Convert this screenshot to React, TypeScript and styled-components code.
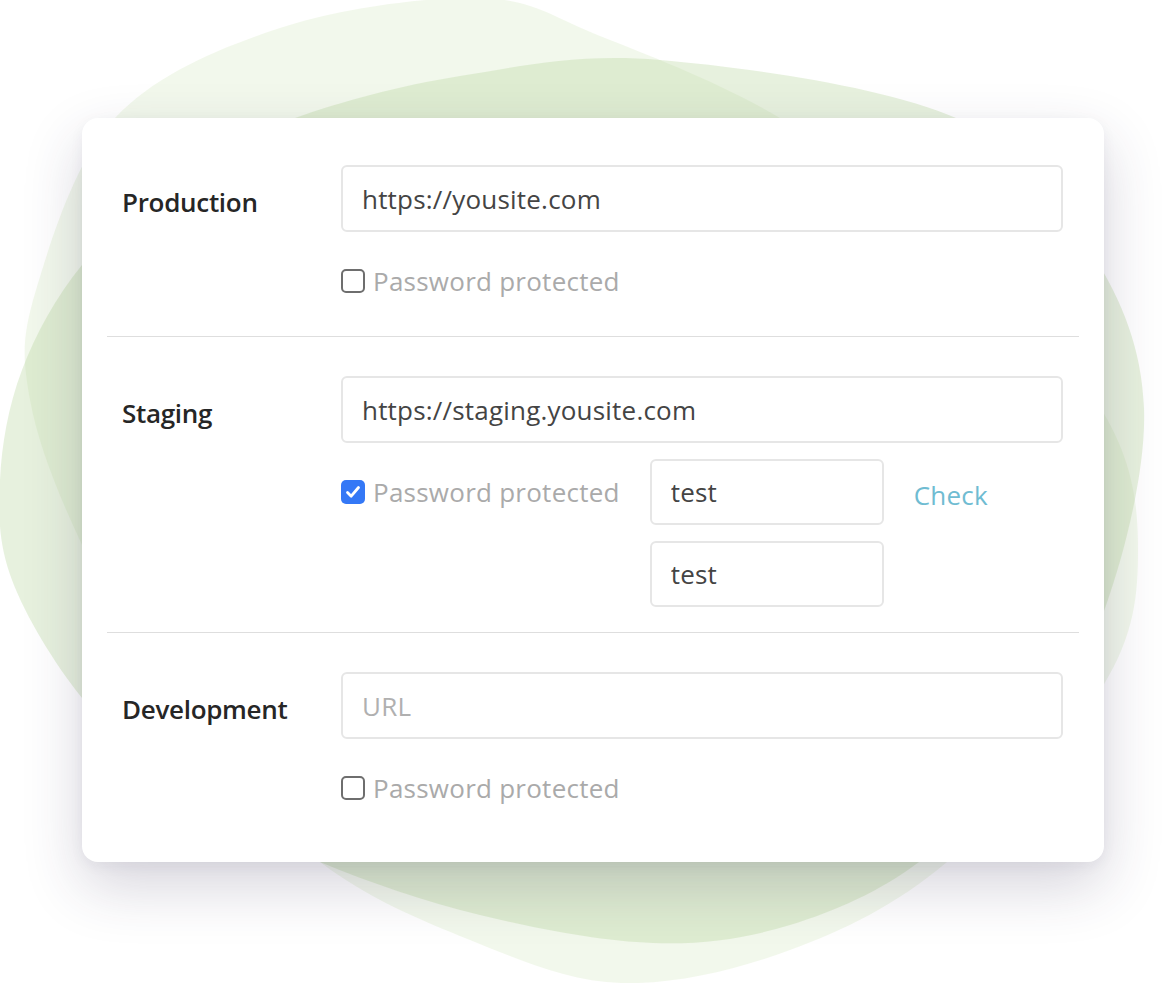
import React, { useState } from 'react';
import styled, { createGlobalStyle } from 'styled-components';

const GlobalStyle = createGlobalStyle`
  html, body {
    margin: 0;
    padding: 0;
    background: #ffffff;
  }
  * {
    box-sizing: border-box;
  }
`;

type Pt = [number, number];

// Closed Catmull-Rom spline through the blob outline points
const smoothPath = (pts: Pt[]) => {
  const n = pts.length;
  let d = `M ${pts[0][0]} ${pts[0][1]}`;
  for (let i = 0; i < n; i++) {
    const p0 = pts[(i - 1 + n) % n];
    const p1 = pts[i];
    const p2 = pts[(i + 1) % n];
    const p3 = pts[(i + 2) % n];
    const c1 = [p1[0] + (p2[0] - p0[0]) / 6, p1[1] + (p2[1] - p0[1]) / 6];
    const c2 = [p2[0] - (p3[0] - p1[0]) / 6, p2[1] - (p3[1] - p1[1]) / 6];
    d += ` C ${c1[0]} ${c1[1]} ${c2[0]} ${c2[1]} ${p2[0]} ${p2[1]}`;
  }
  return d + ' Z';
};

const lightBlob: Pt[] = [
  [480, -2], [600, 36], [780, 118], [960, 250], [1103, 412], [1138, 549],
  [1103, 686], [947, 862], [790, 950], [621, 983], [470, 940], [320, 862],
  [180, 720], [82, 545], [30, 400], [36, 290], [115, 118], [280, 28],
];

const darkBlob: Pt[] = [
  [660, 60], [956, 118], [1090, 250], [1144, 408], [1104, 611], [1020, 750],
  [919, 862], [790, 925], [653, 943], [480, 915], [320, 862], [180, 790],
  [82, 698], [12, 580], [0, 480], [22, 370], [82, 265], [180, 175],
  [295, 118], [460, 76],
];

const Stage = styled.div`
  position: relative;
  width: 1176px;
  height: 983px;
  overflow: hidden;
  padding: 118px 72px 0 82px;
  font-family: 'Open Sans', 'Noto Sans', sans-serif;
`;

const Backdrop = styled.svg`
  position: absolute;
  inset: 0;
  z-index: 0;
`;

const Card = styled.div`
  position: relative;
  z-index: 1;
  width: 1022px;
  background: #ffffff;
  border-radius: 16px;
  padding: 8px 25px 19px;
  box-shadow: 0 24px 60px rgba(48, 40, 80, 0.2), 0 4px 14px rgba(48, 40, 80, 0.05);
`;

const Section = styled.section<{ $last?: boolean }>`
  display: grid;
  grid-template-columns: 219px 1fr;
  padding: 39px 16px 22px 15px;
  border-bottom: ${(p) => (p.$last ? 'none' : '1px solid #dedede')};
`;

const Label = styled.div`
  font-size: 26px;
  font-weight: 600;
  color: #262626;
  line-height: 67px;
  padding-top: 4px;
  letter-spacing: -0.3px;
`;

const Fields = styled.div`
  display: flex;
  flex-direction: column;
  gap: 16px;
`;

const TextInput = styled.input<{ $small?: boolean }>`
  display: block;
  width: ${(p) => (p.$small ? '234px' : '100%')};
  height: ${(p) => (p.$small ? '66px' : '67px')};
  border: 2px solid #e6e6e6;
  border-radius: 6px;
  padding: 0 19px;
  font-family: inherit;
  font-size: 26px;
  letter-spacing: 0.2px;
  color: #444444;
  background: #ffffff;
  outline: none;

  &::placeholder {
    color: #b0b0b0;
  }
`;

const OptionRow = styled.div`
  display: flex;
  align-items: flex-start;
`;

const CheckLabel = styled.label`
  display: flex;
  align-items: center;
  gap: 8px;
  height: 66px;
  font-size: 26px;
  letter-spacing: 0.25px;
  color: #aaaaaa;
  cursor: pointer;
  user-select: none;
`;

const Box = styled.span<{ $checked: boolean }>`
  display: inline-flex;
  align-items: center;
  justify-content: center;
  flex: none;
  width: 24px;
  height: 24px;
  border-radius: 5px;
  border: ${(p) => (p.$checked ? 'none' : '2px solid #6e6e6e')};
  background: ${(p) => (p.$checked ? '#3478f6' : '#ffffff')};
`;

const Credentials = styled.div`
  display: flex;
  flex-direction: column;
  gap: 16px;
  margin-left: 30px;
  padding-bottom: 3px;
`;

const CheckLink = styled.a`
  display: flex;
  align-items: center;
  height: 66px;
  margin-left: 30px;
  padding-top: 5px;
  font-size: 26px;
  letter-spacing: 0.2px;
  color: #6fbcd2;
  text-decoration: none;
  cursor: pointer;
`;

const Checkbox = ({ checked, onToggle }: { checked: boolean; onToggle(): void }) => (
  <CheckLabel onClick={onToggle}>
    <Box $checked={checked}>
      {checked && (
        <svg width="18" height="18" viewBox="0 0 18 18">
          <path
            d="M3.5 9.5 L7.2 13.2 L14.5 4.5"
            fill="none"
            stroke="#ffffff"
            strokeWidth="2.8"
            strokeLinecap="round"
            strokeLinejoin="round"
          />
        </svg>
      )}
    </Box>
    Password protected
  </CheckLabel>
);

interface EnvProps {
  label: string;
  url: string;
  last?: boolean;
  protectedDefault?: boolean;
}

const Environment = ({ label, url, last, protectedDefault = false }: EnvProps) => {
  const [value, setValue] = useState(url);
  const [isProtected, setIsProtected] = useState(protectedDefault);

  return (
    <Section $last={last}>
      <Label>{label}</Label>
      <Fields>
        <TextInput
          value={value}
          placeholder="URL"
          spellCheck={false}
          onChange={(e) => setValue(e.target.value)}
        />
        <OptionRow>
          <Checkbox checked={isProtected} onToggle={() => setIsProtected(!isProtected)} />
          {isProtected && (
            <>
              <Credentials>
                <TextInput $small defaultValue="test" spellCheck={false} />
                <TextInput $small defaultValue="test" spellCheck={false} />
              </Credentials>
              <CheckLink>Check</CheckLink>
            </>
          )}
        </OptionRow>
      </Fields>
    </Section>
  );
};

export default function App() {
  return (
    <>
      <GlobalStyle />
      <Stage>
        <Backdrop width="1176" height="983" viewBox="0 0 1176 983">
          <path d={smoothPath(lightBlob)} fill="#d3e7bf" fillOpacity="0.3" />
          <path d={smoothPath(darkBlob)} fill="#b9d59e" fillOpacity="0.34" />
        </Backdrop>
        <Card>
          <Environment label="Production" url="https://yousite.com" />
          <Environment label="Staging" url="https://staging.yousite.com" protectedDefault />
          <Environment label="Development" url="" last />
        </Card>
      </Stage>
    </>
  );
}
